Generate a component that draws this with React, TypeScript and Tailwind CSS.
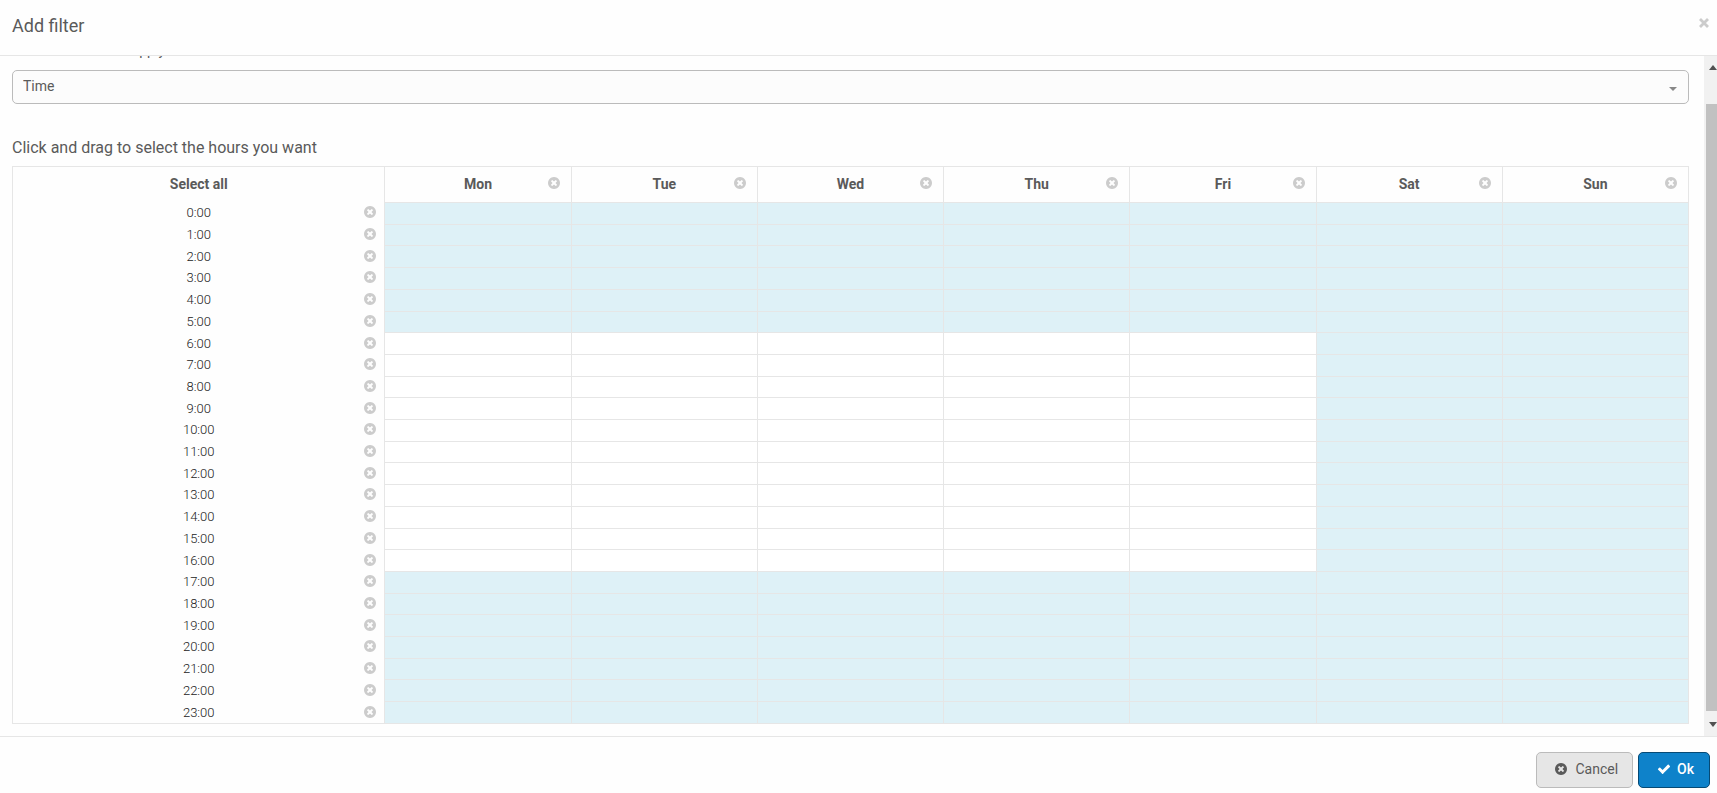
import { useEffect, useRef, useState } from "react";

const DAYS = ["Mon", "Tue", "Wed", "Thu", "Fri", "Sat", "Sun"];
const HOURS = Array.from({ length: 24 }, (_, h) => h);

function isOffHour(day: number, hour: number) {
  return day > 4 || hour < 6 || hour > 16;
}

function initialGrid(): boolean[][] {
  return HOURS.map((hour) => DAYS.map((_, day) => isOffHour(day, hour)));
}

function TimesCircle({ className }: { className?: string }) {
  return (
    <svg viewBox="0 128 1536 1536" fill="currentColor" className={className} aria-hidden="true">
      <path d="M1149 1122q0-26-19-45l-181-181 181-181q19-19 19-45 0-27-19-46l-90-90q-19-19-46-19-26 0-45 19l-181 181-181-181q-19-19-45-19-27 0-46 19l-90 90q-19 19-19 46 0 26 19 45l181 181-181 181q-19 19-19 45 0 27 19 46l90 90q19 19 46 19 26 0 45-19l181-181 181 181q19 19 45 19 27 0 46-19l90-90q19-19 19-46zm387-226q0 209-103 385.500t-279.500 279.500-385.500 103-385.500-103-279.500-279.500-103-385.500 103-385.500 279.500-279.500 385.500-103 385.500 103 279.500 279.500 103 385.500z" />
    </svg>
  );
}

function Check({ className }: { className?: string }) {
  return (
    <svg viewBox="0 0 1792 1792" fill="currentColor" className={className} aria-hidden="true">
      <path d="M1671 566q0 40-28 68l-724 724-136 136q-28 28-68 28t-68-28l-136-136-362-362q-28-28-28-68t28-68l136-136q28-28 68-28t68 28l294 295 656-657q28-28 68-28t68 28l136 136q28 28 28 68z" />
    </svg>
  );
}

function ClearButton({ label, onClick }: { label: string; onClick: () => void }) {
  return (
    <button type="button" aria-label={label} onClick={onClick} className="block text-[#ccc] hover:text-[#999]">
      <TimesCircle className="size-3" />
    </button>
  );
}

export default function App() {
  const [grid, setGrid] = useState<boolean[][]>(initialGrid);
  const [filter, setFilter] = useState("time");
  const [painting, setPainting] = useState<boolean | null>(null);
  const paneRef = useRef<HTMLDivElement>(null);

  useEffect(() => {
    const pane = paneRef.current;
    if (pane) pane.scrollTop = pane.scrollHeight;
  }, []);

  useEffect(() => {
    const stop = () => setPainting(null);
    window.addEventListener("mouseup", stop);
    return () => window.removeEventListener("mouseup", stop);
  }, []);

  function update(match: (hour: number, day: number) => boolean, value: boolean) {
    setGrid((g) => g.map((row, h) => row.map((on, d) => (match(h, d) ? value : on))));
  }

  function handleDown(hour: number, day: number) {
    const value = !grid[hour][day];
    setPainting(value);
    update((h, d) => h === hour && d === day, value);
  }

  function handleEnter(hour: number, day: number) {
    if (painting === null) return;
    update((h, d) => h === hour && d === day, painting);
  }

  return (
    <div
      role="dialog"
      aria-labelledby="dialog-title"
      className="flex h-screen flex-col overflow-hidden bg-[#fefefe] font-[Roboto,sans-serif] text-sm text-[#5a5a5a]"
    >
      <header className="flex h-14 shrink-0 items-center justify-between border-b border-[#e6e6e6] pr-1.5 pb-1 pl-3">
        <h1 id="dialog-title" className="text-lg leading-6">Add filter</h1>
        <button type="button" aria-label="Close" className="mb-1.5 p-0.5 text-[#ccc]">
          <svg viewBox="0 0 10 10" className="size-[10px]" stroke="currentColor" strokeWidth="2.8" aria-hidden="true">
            <path d="M1 1 9 9M9 1 1 9" />
          </svg>
        </button>
      </header>

      <div className="flex min-h-0 flex-1">
        <div ref={paneRef} className="min-w-0 flex-1 overflow-y-auto pt-4 pr-[15px] pb-3 pl-3 [scrollbar-width:none]">
          <label htmlFor="filter" className="mb-2.5 block text-sm leading-5">
            Select the filters to apply
          </label>
          <div className="grid">
            <select
              id="filter"
              value={filter}
              onChange={(e) => setFilter(e.target.value)}
              className="col-start-1 row-start-1 h-[34px] appearance-none rounded-[5px] border border-[#bbb] bg-[#fcfcfc] px-[10px] pb-0.5 text-sm"
            >
              <option value="time">Time</option>
            </select>
            <svg
              viewBox="0 0 8 4"
              className="pointer-events-none col-start-1 row-start-1 mt-1 mr-3 h-1 w-2 self-center justify-self-end text-[#888]"
              fill="currentColor"
              aria-hidden="true"
            >
              <path d="M0 0h8L4 4z" />
            </svg>
          </div>

          <p className="mt-8 mb-1.5 text-base leading-6">Click and drag to select the hours you want</p>

          <table className="h-[558px] w-full table-fixed border-collapse border border-[#e6e6e6] select-none">
            <colgroup>
              <col className="w-2/9" />
              {DAYS.map((d) => (
                <col key={d} className="w-1/9" />
              ))}
            </colgroup>
            <thead>
              <tr className="h-9">
                <th className="border-x border-[#e6e6e6] p-0 pb-0.5 font-bold">
                  <button type="button" onClick={() => update(() => true, true)} className="block w-full">
                    Select all
                  </button>
                </th>
                {DAYS.map((d, day) => (
                  <th key={d} scope="col" className="border-x border-b border-[#e6e6e6] p-0 pb-0.5 font-bold">
                    <div className="grid grid-cols-[1fr_auto_1fr] items-center">
                      <button
                        type="button"
                        onClick={() => update((_, x) => x === day, true)}
                        className="col-start-2"
                      >
                        {d}
                      </button>
                      <div className="flex justify-end pr-[11px] pb-0.5">
                        <ClearButton label={`Clear ${d}`} onClick={() => update((_, x) => x === day, false)} />
                      </div>
                    </div>
                  </th>
                ))}
              </tr>
            </thead>
            <tbody>
              {HOURS.map((hour) => (
                <tr key={hour}>
                  <th
                    scope="row"
                    className="border-x border-t border-x-[#e6e6e6] border-t-[#fefefe] p-0 text-[13px] leading-4 font-light text-[#222]"
                  >
                    <div className="grid grid-cols-[1fr_auto_1fr] items-center">
                      <button
                        type="button"
                        onClick={() => update((h) => h === hour, true)}
                        className="col-start-2"
                      >
                        {hour}:00
                      </button>
                      <div className="flex justify-end pr-2 pb-0.5">
                        <ClearButton label={`Clear ${hour}:00`} onClick={() => update((h) => h === hour, false)} />
                      </div>
                    </div>
                  </th>
                  {DAYS.map((d, day) => (
                    <td
                      key={d}
                      onMouseDown={() => handleDown(hour, day)}
                      onMouseEnter={() => handleEnter(hour, day)}
                      className={`border border-[#e6e6e6] p-0 ${grid[hour][day] ? "bg-[#def1f7]" : "bg-white"}`}
                    />
                  ))}
                </tr>
              ))}
            </tbody>
          </table>
        </div>

        <div className="-mr-1 flex w-[17px] shrink-0 flex-col items-center bg-[#f1f1f1] py-2 text-[#505050]" aria-hidden="true">
          <svg viewBox="0 0 8 5" className="mt-px h-[5px] w-2 shrink-0" fill="currentColor">
            <path d="M0 5h8L4 0z" />
          </svg>
          <div className="mt-[34px] mb-[11px] w-[13px] flex-1 bg-[#c1c1c1]" />
          <svg viewBox="0 0 8 5" className="mb-px h-[5px] w-2 shrink-0" fill="currentColor">
            <path d="M0 0h8L4 5z" />
          </svg>
        </div>
      </div>

      <footer className="flex shrink-0 justify-end gap-[5px] border-t border-[#e6e6e6] pt-[15px] pr-[7px] pb-[5px]">
        <button
          type="button"
          className="flex h-9 items-center gap-2 rounded-[5px] border border-[#bbb] bg-[#e6e6e6] pr-[14px] pb-0.5 pl-[18px]"
        >
          <TimesCircle className="size-3" />
          Cancel
        </button>
        <button
          type="button"
          className="flex h-9 items-center gap-1.5 rounded-[5px] border border-[#064a75] bg-[#0e82ca] pr-[15px] pb-0.5 pl-[18px] font-medium text-white"
        >
          <Check className="size-[14px]" />
          Ok
        </button>
      </footer>
    </div>
  );
}
